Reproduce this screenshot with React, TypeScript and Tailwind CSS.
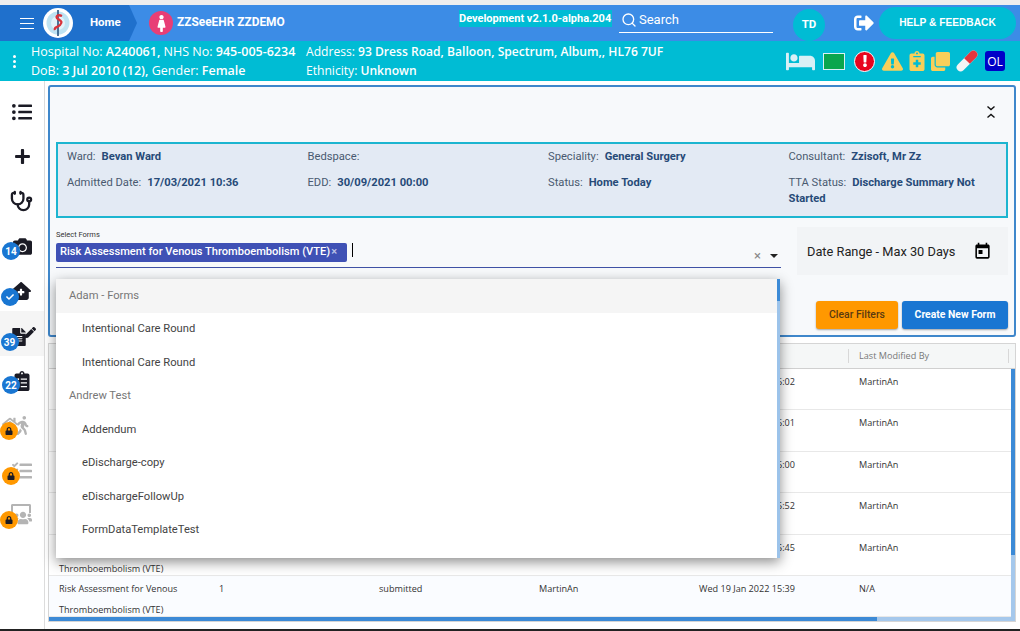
import { FaBed, FaCamera, FaClipboardList, FaClone, FaExclamation, FaExclamationTriangle, FaFemale, FaFileAlt, FaHome, FaCheck, FaListUl, FaLock, FaNotesMedical, FaPen, FaPlus, FaSignOutAlt, FaTasks, FaUsers, FaWalking } from 'react-icons/fa'
import { FaHouseMedical } from 'react-icons/fa6'
import { MdToday } from 'react-icons/md'
import { Search, Stethoscope } from 'lucide-react'
import type { ReactNode } from 'react'

// Forms page of the patient record, with the form picker left open.

const ROWS = [
  { time: 'Wed 19 Jan 2022 16:02', by: 'MartinAn' },
  { time: 'Wed 19 Jan 2022 16:01', by: 'MartinAn' },
  { time: 'Wed 19 Jan 2022 16:00', by: 'MartinAn' },
  { time: 'Wed 19 Jan 2022 15:52', by: 'MartinAn' },
  { time: 'Wed 19 Jan 2022 15:45', by: 'MartinAn' },
  { time: 'Wed 19 Jan 2022 15:39', by: 'N/A' },
]

const OPTIONS = [
  { label: 'Adam - Forms', group: true, first: true },
  { label: 'Intentional Care Round' },
  { label: 'Intentional Care Round' },
  { label: 'Andrew Test', group: true },
  { label: 'Addendum' },
  { label: 'eDischarge-copy' },
  { label: 'eDischargeFollowUp' },
  { label: 'FormDataTemplateTest' },
]

function Logo() {
  return (
    <svg viewBox="0 0 30 30" className="w-[30px] h-[30px] shrink-0">
      <circle cx="15" cy="15" r="15" fill="#fff" />
      <circle cx="15" cy="15" r="11.5" fill="#bfe3f2" />
      <circle cx="15" cy="15" r="7" fill="#e4f3fa" />
      <path d="M15 2v26" stroke="#27547f" strokeWidth="1.6" />
      <path d="M19 8c-5-2-7 1-4 3s5 3 2 6-6 2-5 5" stroke="#d8343c" strokeWidth="2.4" fill="none" />
    </svg>
  )
}

function TopBar() {
  return (
    <div className="h-[36px] bg-[#3c8ce6] flex items-center text-white shrink-0">
      <div className="w-[137px] h-full bg-[#1f70cc] flex items-center [clip-path:polygon(0_0,129px_0,137px_50%,129px_100%,0_100%)]">
        <div className="ml-[20px] w-[14px] flex flex-col gap-[4px]">
          <span className="h-px bg-white" />
          <span className="h-px bg-white" />
          <span className="h-px bg-white" />
        </div>
        <div className="ml-[9px]"><Logo /></div>
        <span className="ml-[17px] text-[11.5px] font-bold">Home</span>
      </div>
      <div className="ml-[12px] w-[24px] h-[24px] rounded-full bg-[#e83e76] flex items-center justify-center">
        <FaFemale className="text-[17px]" />
      </div>
      <span className="ml-[4px] w-[282px] text-[11.9px] font-bold whitespace-nowrap">ZZSeeEHR ZZDEMO</span>
      <div className="w-[153px] h-[17px] -mt-[9px] bg-[#00bcd4] text-[11px] font-bold leading-[17px] whitespace-nowrap">Development v2.1.0-alpha.204</div>
      <div className="ml-[7px] w-[154px] h-[24px] border-b border-white flex items-center gap-[2px] pl-[2px] text-[13px] -mt-[5px]">
        <Search size={16} strokeWidth={2} />
        Search
      </div>
      <div className="ml-[20px] w-[32px] h-[32px] mt-[4px] rounded-full bg-[#00bcd4] flex items-center justify-center text-[11.5px] font-bold">TD</div>
      <FaSignOutAlt className="ml-[29px] text-[20px]" />
      <div className="ml-[5px] w-[137px] h-[32px] rounded-full bg-[#00bcd4] flex items-center justify-center text-[10.2px] font-bold font-['Liberation_Sans',sans-serif]">HELP &amp; FEEDBACK</div>
    </div>
  )
}

function PatientBar() {
  return (
    <div className="h-[40px] bg-[#00bcd4] flex items-center text-white shrink-0 font-['Open_Sans',sans-serif] leading-[19px]">
      <div className="w-[31px] pr-[3px] flex flex-col items-center gap-[2px]">
        <span className="w-[3px] h-[3px] rounded-full bg-white" />
        <span className="w-[3px] h-[3px] rounded-full bg-white" />
        <span className="w-[3px] h-[3px] rounded-full bg-white" />
      </div>
      <div className="w-[275px] whitespace-nowrap text-[12.5px]">
        <div>Hospital No: <b className="font-semibold">A240061,</b> NHS No: <b className="font-semibold">945-005-6234</b></div>
        <div>DoB: <b className="font-semibold">3 Jul 2010 (12),</b> Gender: <b className="font-semibold">Female</b></div>
      </div>
      <div className="flex-1 whitespace-nowrap text-[12.1px]">
        <div>Address: <b className="font-semibold">93 Dress Road, Balloon, Spectrum, Album,, HL76 7UF</b></div>
        <div>Ethnicity: <b className="font-semibold">Unknown</b></div>
      </div>
      <div className="flex items-center mr-[15px]">
        <FaBed className="text-[29px] text-[#d9f0f6]" />
        <span className="ml-[8px] w-[22px] h-[17px] bg-[#0aa64e] border border-[#d9f0f6]" />
        <span className="ml-[9px] w-[21px] h-[21px] rounded-full bg-[#e8051e] border border-white flex items-center justify-center"><FaExclamation className="text-[12px] text-white" /></span>
        <FaExclamationTriangle className="ml-[7px] text-[21px] text-[#f8cf5a]" />
        <FaNotesMedical className="ml-[4px] text-[20px] text-[#f8cf5a]" />
        <FaClone className="ml-[4px] text-[19px] text-[#f8cf5a]" />
        <svg viewBox="0 0 20 20" className="ml-[7px] w-[20px] h-[20px] overflow-visible">
          <g transform="rotate(-45 10 10)">
            <rect x="-3" y="6" width="26" height="8" rx="4" fill="#f4f4f4" />
            <path d="M10 6h9a4 4 0 0 1 0 8h-9z" fill="#e5353c" />
          </g>
        </svg>
        <span className="ml-[8px] w-[20px] h-[20px] rounded-[3px] bg-[#0000c8] flex items-center justify-center text-[12px]">OL</span>
      </div>
    </div>
  )
}

function SideItem({ icon, badge, active }: { icon: ReactNode; badge?: ReactNode; active?: boolean }) {
  return (
    <div className={`relative h-[45px] pt-[6px] flex items-center justify-center text-[#1b1b25] ${active ? 'bg-[#f5f5f5]' : ''}`}>
      {icon}
      {badge}
    </div>
  )
}

function CountBadge({ children, className }: { children: ReactNode; className: string }) {
  return (
    <span className={`absolute w-[18px] h-[18px] rounded-full bg-[#1976d2] text-white text-[10px] font-bold flex items-center justify-center ${className}`}>
      {children}
    </span>
  )
}

function LockBadge({ className }: { className: string }) {
  return (
    <span className={`absolute w-[18px] h-[18px] rounded-full bg-[#ff9800] text-[#1b1b25] flex items-center justify-center ${className}`}>
      <FaLock className="text-[8px]" />
    </span>
  )
}

function Sidebar() {
  return (
    <div className="w-[45px] shrink-0 border-r border-[#dcdcdc] pt-[5px]">
      <SideItem icon={<FaListUl className="text-[20px]" />} />
      <SideItem icon={<FaPlus className="text-[17px]" />} />
      <SideItem icon={<Stethoscope size={23} strokeWidth={2.4} className="-ml-[2px]" />} />
      <SideItem icon={<FaCamera className="text-[19px] -mt-[1px]" />} badge={<CountBadge className="left-[2px] bottom-[6px]">14</CountBadge>} />
      <SideItem icon={<FaHouseMedical className="text-[20px] -mt-[1px] -ml-[3px]" />} badge={<CountBadge className="left-[0.5px] bottom-[5px]"><FaCheck className="text-[8px]" /></CountBadge>} />
      <SideItem
        active
        icon={<span className="relative -ml-[6px]"><FaFileAlt className="text-[18px]" /><FaPen className="absolute -right-[8px] -top-[1px] text-[11px]" /></span>}
        badge={<CountBadge className="left-[0.5px] bottom-[5px]">39</CountBadge>}
      />
      <SideItem icon={<FaClipboardList className="text-[20px] -mt-[2px]" />} badge={<CountBadge className="left-[2px] bottom-[7px]">22</CountBadge>} />
      <SideItem
        icon={<span className="relative -mt-[3px]"><FaHome className="absolute -left-[11px] top-0 text-[16px] text-[#b4b4b4]" /><FaWalking className="text-[19px] text-[#b4b4b4]" /></span>}
        badge={<LockBadge className="left-0 bottom-[6px]" />}
      />
      <SideItem icon={<FaTasks className="text-[20px] text-[#b4b4b4] -mt-[2px]" />} badge={<LockBadge className="left-[2px] bottom-[6px]" />} />
      <SideItem
        icon={
          <span className="relative -mt-[5px] w-[22px] h-[20px]">
            <span className="absolute left-0 top-0 w-[20px] h-[9px] border-2 border-b-0 border-[#b4b4b4] rounded-t-[2px]" />
            <FaUsers className="absolute left-[3px] top-[5px] text-[18px] text-[#b4b4b4]" />
          </span>
        }
        badge={<LockBadge className="left-0 bottom-[7px]" />}
      />
    </div>
  )
}

function Info({ label, value, className }: { label: string; value?: string; className?: string }) {
  return (
    <div className={`text-[11.2px] leading-[16px] ${className ?? ''}`}>
      <span className="text-[#4a5a70] mr-[6px]">{label}</span>
      <span className="font-bold text-[#274a78]">{value}</span>
    </div>
  )
}

function InfoBox() {
  return (
    <div className="h-[76px] border-2 border-[#1cb5d0] bg-[#e3eaf4] grid grid-cols-[repeat(4,240.5px)] pl-[9px] pt-[5px] gap-y-[10px] content-start">
      <Info label="Ward:" value="Bevan Ward" />
      <Info label="Bedspace:" />
      <Info label="Speciality:" value="General Surgery" />
      <Info label="Consultant:" value="Zzisoft, Mr Zz" />
      <Info label="Admitted Date:" value="17/03/2021 10:36" />
      <Info label="EDD:" value="30/09/2021 00:00" />
      <Info label="Status:" value="Home Today" />
      <Info label="TTA Status:" value="Discharge Summary Not Started" className="w-[200px]" />
    </div>
  )
}

function FormSelect() {
  return (
    <div className="flex-1 relative">
      <div className="text-[7.5px] leading-[10px] pt-[3px] text-[#333]">Select Forms</div>
      <div className="h-[28px] border-b border-[#3f51a5] flex pt-[3px]">
        <span className="h-[19px] w-[291px] bg-[#3f51b5] rounded-[2px] text-white text-[11.1px] font-medium flex items-center pl-[4px] whitespace-nowrap">
          Risk Assessment for Venous Thromboembolism (VTE)<span className="text-[#b9c1e6] ml-[1px]">×</span>
        </span>
        <span className="ml-[5px] w-px h-[14px] bg-black" />
        <span className="ml-auto mr-[3px] mt-[1px] flex items-center gap-[9px] text-[#888] text-[13px] leading-[13px]">
          ×
          <span className="w-0 h-0 border-x-[4px] border-x-transparent border-t-[4px] border-t-[#222]" />
        </span>
      </div>
      <div className="absolute left-0 top-[52px] w-[724px] h-[279px] z-10 bg-white shadow-[0_4px_12px_rgba(0,0,0,0.45)] flex">
        <div className="flex-1">
          {OPTIONS.map((o, i) => (
            <div
              key={i}
              className={`h-[33.5px] pt-[1px] flex items-center text-[11.2px] ${o.group ? 'pl-[13px] text-[#777]' : 'pl-[26px] text-[#444]'} ${o.first ? 'bg-[#f5f5f5]' : ''}`}
            >
              {o.label}
            </div>
          ))}
        </div>
        <div className="w-[3px] bg-[#9cc3ea]">
          <div className="h-[22px] bg-[#3c8ad6]" />
        </div>
      </div>
    </div>
  )
}

function FiltersCard() {
  return (
    <div className="h-[252px] rounded-[3px] border-2 border-[#3f87cb] bg-[#f7f9fb] px-[6px]">
      <div className="h-[55px] flex items-center justify-end pr-[12px] pb-[6px]">
        <svg viewBox="0 0 10 14" className="w-[10px] h-[14px]" fill="none" stroke="#111" strokeWidth="1.4">
          <path d="M1.5 1.5 5 4.5l3.5-3M1.5 12.5 5 9.5l3.5 3" />
        </svg>
      </div>
      <InfoBox />
      <div className="flex gap-[16px] mt-[9px]">
        <FormSelect />
        <div className="w-[211px] h-[48px] bg-[#f2f4f6] flex items-center justify-between pl-[10px] pr-[16px] pt-[1px] text-[12.8px] text-[#222] whitespace-nowrap">
          Date Range - Max 30 Days
          <MdToday className="text-[19px] text-black" />
        </div>
      </div>
      <div className="flex justify-end gap-[4px] mt-[26px]">
        <button className="w-[82px] h-[28px] rounded-[3px] bg-[#ff9800] text-[#5a3a10] text-[10.4px] font-medium shadow-[0_1px_2px_rgba(0,0,0,0.35)]">Clear Filters</button>
        <button className="w-[106px] h-[28px] rounded-[3px] bg-[#1976d2] text-white text-[10.4px] font-bold shadow-[0_1px_2px_rgba(0,0,0,0.35)]">Create New Form</button>
      </div>
    </div>
  )
}

function FormsTable() {
  return (
    <div className="mt-[6px] h-[279px] border border-[#d5d5d5] flex flex-col font-['Open_Sans',sans-serif] text-[9.1px] text-[#333]">
      <div className="h-[25px] shrink-0 bg-[#f5f7f7] border-b border-[#d0d0d0] grid grid-cols-[repeat(6,160px)] items-center text-[#777]">
        {['Form Name', 'Version', 'Status', 'Created By', 'Last Modified', 'Last Modified By'].map((h) => (
          <div key={h} className="pl-[10px] h-[14px] leading-[14px] border-r border-[#d8d8d8] whitespace-nowrap">{h}</div>
        ))}
      </div>
      <div className="flex-1 flex min-h-0">
        <div className="flex-1 min-w-0">
          {ROWS.map((r, i) => (
            <div
              key={i}
              className={`h-[41.4px] border-b border-[#e8e8e8] grid grid-cols-[repeat(6,160px)] leading-[21px] pt-[2px] overflow-hidden ${i === 5 ? 'bg-[#fafcff]' : 'bg-white'}`}
            >
              <div className="pl-[10px] pr-[20px]">Risk Assessment for Venous Thromboembolism (VTE)</div>
              <div className="pl-[10px]">1</div>
              <div className="pl-[10px]">submitted</div>
              <div className="pl-[10px]">MartinAn</div>
              <div className="pl-[10px] whitespace-nowrap">{r.time}</div>
              <div className="pl-[10px]">{r.by}</div>
            </div>
          ))}
        </div>
        <div className="w-[4px] bg-[#a5c8ec]">
          <div className="h-[186px] bg-[#3c8ad6]" />
        </div>
      </div>
      <div className="h-[4px] shrink-0 bg-[#a5c8ec]">
        <div className="w-[828px] h-full bg-[#3c8ad6]" />
      </div>
    </div>
  )
}

export default function App() {
  return (
    <div className="w-[1020px] h-[631px] overflow-hidden bg-white flex flex-col font-['Roboto',sans-serif]">
      <div className="h-[5px] shrink-0 bg-[#eeeeee]" />
      <TopBar />
      <PatientBar />
      <div className="flex-1 flex min-h-0">
        <Sidebar />
        <div className="flex-1 min-w-0 pl-[3px] pr-[4px] pt-[4px]">
          <FiltersCard />
          <FormsTable />
        </div>
      </div>
      <div className="h-[2px] shrink-0 bg-[#222]" />
    </div>
  )
}
